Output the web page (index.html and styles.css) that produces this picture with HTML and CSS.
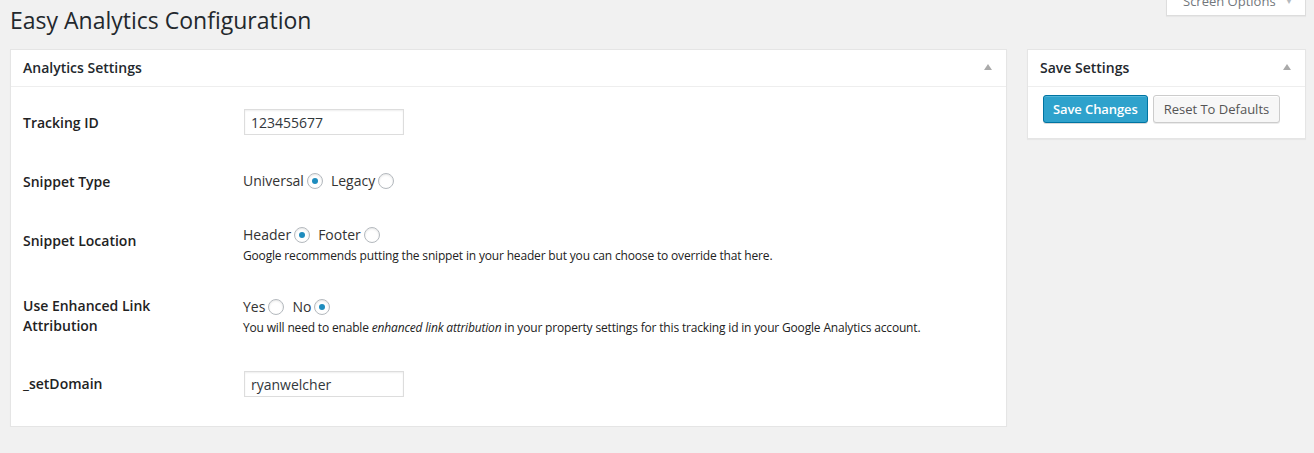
FILE: index.html
```html
<!DOCTYPE html>
<html>
<head>
<meta charset="utf-8">
<link rel="stylesheet" href="styles.css">
</head>
<body>
<div class="wrap">
  <div class="screen-options">Screen Options <span class="so-arrow">&#9660;</span></div>
  <h1 class="page-title">Easy Analytics Configuration</h1>
  <div class="columns">
    <div class="postbox main-box">
      <div class="postbox-head">
        <h2 class="postbox-title">Analytics Settings</h2>
        <span class="toggle"></span>
      </div>
      <div class="inside">
        <div class="row row-1">
          <div class="label">Tracking ID</div>
          <div class="field"><input class="text" type="text" value="123455677"></div>
        </div>
        <div class="row row-2">
          <div class="label">Snippet Type</div>
          <div class="field">
            <div class="radios">
              <span>Universal</span><span class="radio checked"></span>
              <span class="gap"></span><span>Legacy</span><span class="radio"></span>
            </div>
          </div>
        </div>
        <div class="row row-3">
          <div class="label">Snippet Location</div>
          <div class="field">
            <div class="radios">
              <span>Header</span><span class="radio checked"></span>
              <span class="gap"></span><span>Footer</span><span class="radio"></span>
            </div>
            <p class="desc">Google recommends putting the snippet in your header but you can choose to override that here.</p>
          </div>
        </div>
        <div class="row row-4">
          <div class="label">Use Enhanced Link<br>Attribution</div>
          <div class="field">
            <div class="radios">
              <span>Yes</span><span class="radio"></span>
              <span class="gap"></span><span>No</span><span class="radio checked"></span>
            </div>
            <p class="desc">You will need to enable <em>enhanced link attribution</em> in your property settings for this tracking id in your Google Analytics account.</p>
          </div>
        </div>
        <div class="row row-5">
          <div class="label">_setDomain</div>
          <div class="field"><input class="text" type="text" value="ryanwelcher"></div>
        </div>
      </div>
    </div>
    <div class="postbox side-box">
      <div class="postbox-head">
        <h2 class="postbox-title">Save Settings</h2>
        <span class="toggle"></span>
      </div>
      <div class="side-inside">
        <button class="btn btn-primary">Save Changes</button>
        <button class="btn">Reset To Defaults</button>
      </div>
    </div>
  </div>
</div>
</body>
</html>
```
FILE: styles.css
```css
* { box-sizing: border-box; }
html, body { margin: 0; padding: 0; }
body {
  background: #f1f1f1;
  font-family: "Open Sans", "Noto Sans", sans-serif;
  color: #444;
  font-size: 13px;
}
.wrap {
  position: relative;
  padding: 0 8px 0 10px;
}
.screen-options {
  position: absolute;
  top: -12px;
  right: 8px;
  width: 140px;
  height: 28px;
  background: #fff;
  border: 1px solid #ddd;
  border-top: none;
  box-shadow: 0 1px 1px rgba(0,0,0,.04);
  color: #72777c;
  font-size: 13px;
  line-height: 26px;
  padding-left: 16px;
}
.so-arrow {
  font-size: 8px;
  color: #b4b9be;
  margin-left: 6px;
  vertical-align: 2px;
}
.page-title {
  margin: 0;
  padding: 2px 0 0 0;
  font-size: 23px;
  font-weight: 400;
  line-height: 36px;
  color: #23282d;
}
.columns {
  display: flex;
  gap: 20px;
  margin-top: 11px;
  align-items: flex-start;
}
.postbox {
  background: #fff;
  border: 1px solid #e5e5e5;
  box-shadow: 0 1px 1px rgba(0,0,0,.04);
}
.main-box { width: 997px; }
.side-box { width: 279px; }
.postbox-head {
  display: flex;
  align-items: center;
  justify-content: space-between;
  height: 37px;
  border-bottom: 1px solid #eee;
  padding: 0 14px 2px 12px;
}
.postbox-title {
  margin: 0;
  font-size: 14px;
  font-weight: 600;
  color: #23282d;
}
.toggle {
  width: 0;
  height: 0;
  border-left: 4px solid transparent;
  border-right: 4px solid transparent;
  border-bottom: 6px solid #aaa;
}
.inside {
  padding: 7px 12px 12px;
}
.row {
  display: flex;
  font-size: 14px;
  color: #222;
}
.label {
  width: 220px;
  flex: none;
  font-weight: 600;
  line-height: 20px;
  color: #222;
}
.field { flex: 1; }
.row-1 { height: 59px; }
.row-1 .label { padding-top: 19px; }
.row-1 .field { padding-top: 15px; }
.row-2 { height: 59px; }
.row-2 .label { padding-top: 19px; }
.row-2 .field { padding-top: 18px; }
.row-3 { height: 65px; }
.row-3 .label { padding-top: 19px; }
.row-3 .field { padding-top: 13px; }
.row-4 { height: 78px; }
.row-4 .label { padding-top: 19px; }
.row-4 .field { padding-top: 20px; }
.row-5 { height: 59px; }
.row-5 .label { padding-top: 19px; }
.row-5 .field { padding-top: 16px; }
.text {
  display: block;
  width: 160px;
  height: 26px;
  margin-left: 1px;
  border: 1px solid #ddd;
  box-shadow: inset 0 1px 2px rgba(0,0,0,.07);
  font-family: "Open Sans", "Noto Sans", sans-serif;
  font-size: 14px;
  color: #32373c;
  padding: 0 6px;
  background: #fff;
}
.radios {
  display: flex;
  align-items: center;
  line-height: 20px;
  color: #333;
}
.radio {
  width: 16px;
  height: 16px;
  border: 1px solid #b4b9be;
  border-radius: 50%;
  margin-left: 3px;
  box-shadow: inset 0 1px 2px rgba(0,0,0,.1);
  display: flex;
  align-items: center;
  justify-content: center;
  background: #fff;
}
.radio.checked::after {
  content: "";
  width: 6px;
  height: 6px;
  border-radius: 50%;
  background: #1e8cbe;
}
.gap { width: 8px; }
.desc {
  margin: 2px 0 0;
  font-size: 12px;
  line-height: 17px;
  color: #222;
  letter-spacing: -0.17px;
}
.side-inside {
  display: flex;
  gap: 5px;
  padding: 8px 15px 15px;
}
.btn {
  font-family: "Open Sans", "Noto Sans", sans-serif;
  font-size: 13px;
  height: 28px;
  padding: 0 10px;
  border-radius: 3px;
  border: 1px solid #ccc;
  background: #f7f7f7;
  color: #555;
  box-shadow: inset 0 1px 0 #fff, 0 1px 0 rgba(0,0,0,.08);
  cursor: pointer;
}
.btn-primary {
  padding: 0 9px;
  background: #2ea2cc;
  border-color: #0074a2;
  color: #fff;
  font-weight: 600;
  letter-spacing: -0.1px;
  box-shadow: inset 0 1px 0 rgba(120,200,230,.5), 0 1px 0 rgba(0,0,0,.15);
}
```
